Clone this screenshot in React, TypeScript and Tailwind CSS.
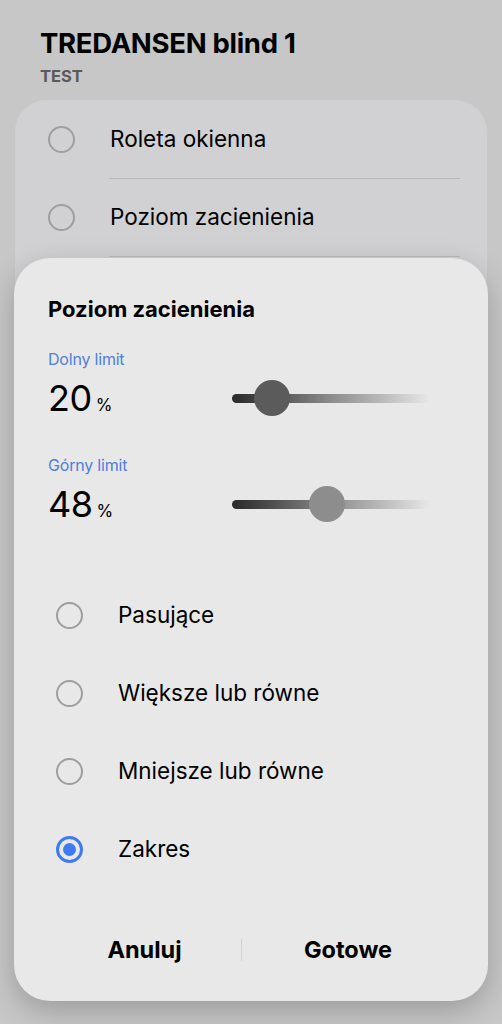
import { useState } from 'react';

const options = ['Pasujące', 'Większe lub równe', 'Mniejsze lub równe', 'Zakres'];

function Radio({ checked = false }: { checked?: boolean }) {
  if (checked) {
    return (
      <span className="flex h-[27px] w-[27px] shrink-0 items-center justify-center rounded-full border-[3px] border-[#3f7bf0]">
        <span className="h-[13px] w-[13px] rounded-full bg-[#3f7bf0]" />
      </span>
    );
  }
  return <span className="h-[27px] w-[27px] shrink-0 rounded-full border-2 border-[#9e9e9e]" />;
}

function LimitSlider({ label, value, thumb }: { label: string; value: number; thumb: string }) {
  return (
    <div>
      <p className="text-[16px] leading-[20px] tracking-[-0.2px] text-[#4f7fd9]">{label}</p>
      <div className="mt-[7px] flex h-[44px] items-center">
        <div className="flex w-[184px] items-baseline">
          <span className="text-[36px] font-normal leading-none tracking-[-0.5px] text-black">{value}</span>
          <span className="ml-[4px] text-[17px] leading-none text-black">%</span>
        </div>
        <div className="relative h-[9px] w-[198px] rounded-full bg-linear-to-r from-[#2a2a2a] via-[#8c8c8c] to-[#e8e8e8]">
          <span
            className={`absolute top-1/2 h-[36px] w-[36px] -translate-x-1/2 -translate-y-1/2 rounded-full ${thumb}`}
            style={{ left: `${value}%` }}
          />
        </div>
      </div>
    </div>
  );
}

export default function App() {
  const [selected] = useState(3);

  return (
    <div className="relative h-[1024px] w-full overflow-hidden bg-[#c7c7c7] font-['Inter',sans-serif] text-black">
      <header className="px-[40px] pt-[28px]">
        <h1 className="text-[27.5px] font-bold leading-[30px] tracking-[-0.3px]">TREDANSEN blind 1</h1>
        <p className="mt-[8px] text-[16.5px] font-bold leading-[20px] text-[#5a5a5a]">TEST</p>
      </header>

      <div className="mx-[15px] mt-[14px] h-[360px] rounded-[32px] bg-[#d1d1d3] pt-[1px]">
        {['Roleta okienna', 'Poziom zacienienia'].map((item) => (
          <div key={item}>
            <div className="flex h-[77px] items-center pl-[33px]">
              <Radio />
              <span className="ml-[35px] text-[22.5px] leading-none">{item}</span>
            </div>
            <div className="ml-[94px] mr-[27px] h-px bg-[#b9b9bb]" />
          </div>
        ))}
      </div>

      <div className="absolute left-[14px] right-[14px] top-[258px] h-[743px] rounded-[36px] bg-[#e8e8e8] px-[34px] pt-[38px] shadow-[0_10px_30px_rgba(0,0,0,0.22)]">
        <h2 className="text-[22px] font-bold leading-[26px]">Poziom zacienienia</h2>

        <div className="mt-[27px]">
          <LimitSlider label="Dolny limit" value={20} thumb="bg-[#5b5b5b]" />
        </div>
        <div className="mt-[35px]">
          <LimitSlider label="Górny limit" value={48} thumb="bg-[#8d8d8d]" />
        </div>

        <div className="mt-[50px] pl-[8px]">
          {options.map((opt, i) => (
            <div key={opt} className="flex h-[78px] items-center">
              <Radio checked={i === selected} />
              <span className="ml-[35px] text-[22.5px] leading-none">{opt}</span>
            </div>
          ))}
        </div>

        <div className="mt-[34px] flex h-[56px] items-center">
          <button className="w-[193px] text-center text-[23.5px] font-bold">Anuluj</button>
          <span className="h-[22px] w-px bg-[#d2d2d2]" />
          <button className="flex-1 text-center text-[23.5px] font-bold">Gotowe</button>
        </div>
      </div>
    </div>
  );
}
